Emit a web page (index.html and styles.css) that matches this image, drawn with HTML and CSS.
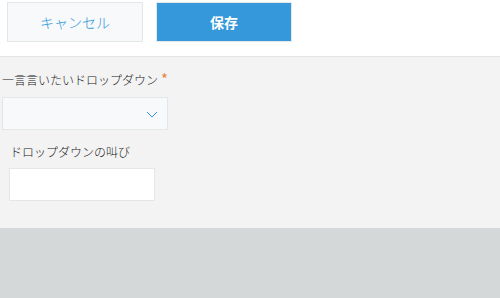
FILE: index.html
```html
<!DOCTYPE html>
<html lang="ja">
<head>
<meta charset="utf-8">
<link rel="stylesheet" href="styles.css">
</head>
<body>
<div class="header">
  <button class="btn btn-cancel">キャンセル</button>
  <button class="btn btn-save">保存</button>
</div>
<div class="main">
  <div class="label label-top">一言言いたいドロップダウン<span class="req">*</span></div>
  <div class="select">
    <svg class="chev" width="12" height="7" viewBox="0 0 12 7"><path d="M1 1 L6 6 L11 1" fill="none" stroke="#3498db" stroke-width="1"/></svg>
  </div>
  <div class="sub">
    <div class="label">ドロップダウンの叫び</div>
    <div class="input"></div>
  </div>
</div>
<div class="footer"></div>
</body>
</html>
```
FILE: styles.css
```css
html, body {
  margin: 0;
  padding: 0;
  height: 100%;
}
body {
  font-family: "Noto Sans CJK JP", "Noto Sans", sans-serif;
  background: #d4d8d8;
  display: flex;
  flex-direction: column;
}
.header {
  background: #ffffff;
  height: 54px;
  padding: 2px 0 0 7px;
  display: flex;
  gap: 13px;
  align-items: flex-start;
  border-bottom: 1px solid #e3e7e8;
}
.btn {
  box-sizing: border-box;
  width: 136px;
  height: 40px;
  font-family: inherit;
  font-size: 14px;
  border: 1px solid #e3e7e8;
  margin: 0;
  padding: 0;
}
.btn-cancel {
  background: #f7f9fa;
  color: #3498db;
  font-weight: 300;
}
.btn-save {
  background: #3498db;
  color: #ffffff;
  font-weight: bold;
}
.main {
  background: #f3f3f3;
  height: 171px;
  box-sizing: border-box;
  padding-top: 14px;
}
.label {
  font-size: 12px;
  line-height: 18px;
  color: #222222;
  font-weight: 300;
}
.label-top {
  padding-left: 2px;
}
.req {
  color: #e5883c;
  margin-left: 3px;
  font-size: 15px;
  line-height: 12px;
  font-weight: 400;
}
.select {
  box-sizing: border-box;
  margin: 8px 0 0 2px;
  width: 166px;
  height: 33px;
  background: #f7f9fa;
  border: 1px solid #e3e7e8;
  display: flex;
  align-items: center;
  justify-content: flex-end;
  padding-right: 9px;
}
.chev {
  display: block;
  margin-top: 2px;
}
.sub {
  padding: 13px 0 0 9px;
}
.sub .label {
  padding-left: 1px;
}
.input {
  box-sizing: border-box;
  margin-top: 7px;
  width: 146px;
  height: 33px;
  background: #ffffff;
  border: 1px solid #e3e7e8;
}
.footer {
  flex: 1;
  background: #d4d8d8;
}
```
